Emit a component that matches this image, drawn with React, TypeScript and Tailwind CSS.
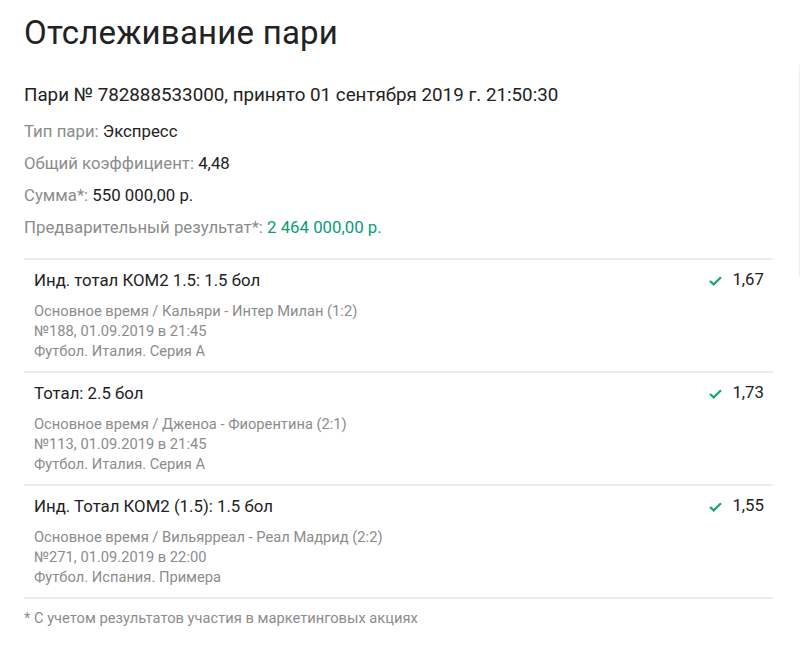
const bets = [
  {
    title: 'Инд. тотал КОМ2 1.5: 1.5 бол',
    event: 'Основное время / Кальяри - Интер Милан (1:2)',
    num: '№188, 01.09.2019 в 21:45',
    league: 'Футбол. Италия. Серия А',
    odds: '1,67',
  },
  {
    title: 'Тотал: 2.5 бол',
    event: 'Основное время / Дженоа - Фиорентина (2:1)',
    num: '№113, 01.09.2019 в 21:45',
    league: 'Футбол. Италия. Серия А',
    odds: '1,73',
  },
  {
    title: 'Инд. Тотал КОМ2 (1.5): 1.5 бол',
    event: 'Основное время / Вильярреал - Реал Мадрид (2:2)',
    num: '№271, 01.09.2019 в 22:00',
    league: 'Футбол. Испания. Примера',
    odds: '1,55',
  },
];

function Check() {
  return (
    <svg width="13" height="10" viewBox="0 0 13 10" className="mt-[1px]">
      <path d="M1 5 L4.7 8.4 L12 1.2" fill="none" stroke="#17a57c" strokeWidth="2.2" />
    </svg>
  );
}

export default function App() {
  return (
    <div className="min-h-[647px] bg-white font-['Roboto',sans-serif] text-[#222]">
      <div className="relative border-b border-[#f1f1f1] pb-[25px] pl-[24px] pr-[27px]">
        {/* faint side shadow */}
        <div className="absolute right-0 top-[65px] h-[212px] w-[1px] bg-[#f0f0f0]" />

        <h1 className="pt-[11px] text-[33px] leading-[44px] tracking-[0.2px]">Отслеживание пари</h1>

        <p className="mt-[28px] text-[18.8px] leading-[24px]">
          Пари № 782888533000, принято 01 сентября 2019 г. 21:50:30
        </p>

        {/* Bet info */}
        <div className="mt-[8px] flex flex-col text-[16.8px] leading-[32px]">
          <div>
            <span className="text-[#8c8c8c]">Тип пари: </span>Экспресс
          </div>
          <div>
            <span className="text-[#8c8c8c]">Общий коэффициент: </span>4,48
          </div>
          <div>
            <span className="text-[#8c8c8c]">Сумма*: </span>550 000,00 р.
          </div>
          <div>
            <span className="text-[#8c8c8c]">Предварительный результат*: </span>
            <span className="text-[#0c9a7c]">2 464 000,00 р.</span>
          </div>
        </div>

        {/* Events */}
        <div className="mt-[15px] border-t-2 border-[#ececec]">
          {bets.map((b) => (
            <div key={b.num} className="flex justify-between border-b-2 border-[#ececec] pb-[10px] pl-[10px] pr-[9px] pt-[9px]">
              <div>
                <div className="text-[16.8px] leading-[22px]">{b.title}</div>
                <div className="mt-[10px] text-[14.7px] leading-[20px] text-[#8c8c8c]">
                  <div>{b.event}</div>
                  <div>{b.num}</div>
                  <div>{b.league}</div>
                </div>
              </div>
              <div className="flex h-[22px] items-center gap-[10px] text-[16.8px]">
                <Check />
                <span>{b.odds}</span>
              </div>
            </div>
          ))}
        </div>

        <p className="mt-[9px] text-[14.7px] leading-[20px] text-[#8c8c8c]">
          * С учетом результатов участия в маркетинговых акциях
        </p>
      </div>
    </div>
  );
}
